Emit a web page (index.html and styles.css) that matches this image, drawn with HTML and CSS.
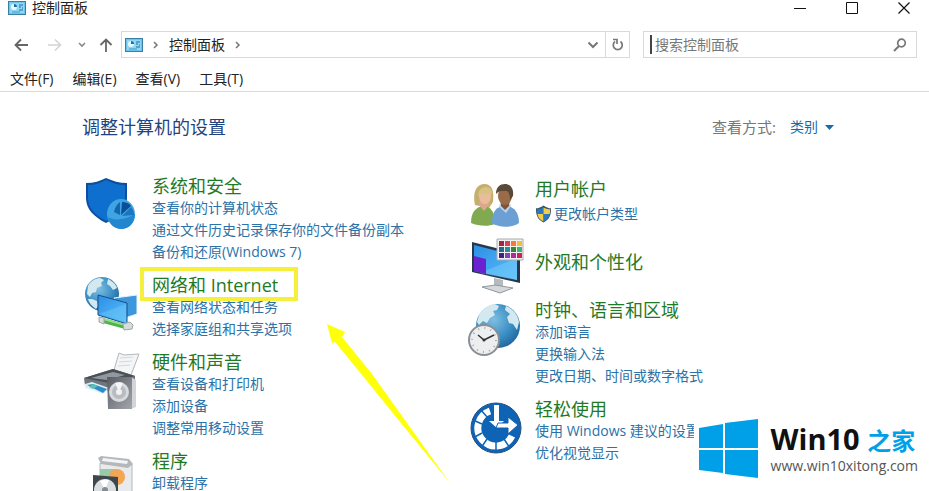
FILE: index.html
```html
<!DOCTYPE html>
<html lang="zh-CN">
<head>
  <meta charset="UTF-8">
  <title>控制面板</title>
  <meta name="viewport" content="width=device-width, initial-scale=1.0">
  <link rel="stylesheet" href="styles.css">
</head>
<body>

  <svg width="0" height="0" class="defs" aria-hidden="true">
    <defs>
      <linearGradient id="screen" x1="0" y1="0" x2="1" y2="1">
        <stop offset="0" stop-color="#2b8fe6"/>
        <stop offset="1" stop-color="#5cc0fa"/>
      </linearGradient>
      <radialGradient id="ocean" cx="0.4" cy="0.35" r="0.7">
        <stop offset="0" stop-color="#7fbfe2"/>
        <stop offset="0.6" stop-color="#3b8fc4"/>
        <stop offset="1" stop-color="#1f659c"/>
      </radialGradient>
      <linearGradient id="metal" x1="0" y1="0" x2="1" y2="1">
        <stop offset="0" stop-color="#585c62"/>
        <stop offset="1" stop-color="#a3a7ac"/>
      </linearGradient>
      <symbol id="panel" viewBox="0 0 18 14">
        <rect x="0.5" y="0.5" width="17" height="13" fill="#6cc4ea" stroke="#3a7fa5"/>
        <rect x="2" y="2" width="14" height="10" fill="#8fd8f5"/>
        <circle cx="6" cy="6" r="3" fill="#e8f8ff"/>
        <path d="M6 6V3a3 3 0 0 1 3 3z" fill="#1b6c9f"/>
        <path d="M11 4h4M11 6h2M14 7h1M11 9h4" stroke="#1f6f9e"/>
        <path d="M4 11h8" stroke="#3f98c4"/>
      </symbol>
    </defs>
  </svg>

  <div class="window">
    <header class="titlebar">
      <svg class="panel-icon" aria-hidden="true"><use href="#panel"/></svg>
      <span class="titlebar-text">控制面板</span>
      <div class="window-buttons">
        <button aria-label="最小化"><svg width="12" height="12"><path d="M0 6.5h12" stroke="#111"/></svg></button>
        <button aria-label="最大化"><svg width="12" height="12"><path d="M0.5 0.5h11v11h-11z" fill="none" stroke="#111"/></svg></button>
        <button aria-label="关闭"><svg width="12" height="12"><path d="M0.5 0.5l11 11M11.5 0.5l-11 11" stroke="#111" stroke-width="1.2"/></svg></button>
      </div>
    </header>

    <nav class="navbar">
      <div class="nav-buttons">
        <button aria-label="后退"><svg width="14" height="14"><path d="M14 7H1.5M7 1.5L1.5 7 7 12.5" fill="none" stroke="#666" stroke-width="1.8"/></svg></button>
        <button aria-label="前进"><svg width="14" height="14"><path d="M0 7h12.5M7 1.5L12.5 7 7 12.5" fill="none" stroke="#d4d4d4" stroke-width="1.6"/></svg></button>
        <button class="recent" aria-label="最近位置"><svg width="8" height="6"><path d="M1 1l3 3 3-3" fill="none" stroke="#888" stroke-width="1.6"/></svg></button>
        <button aria-label="上移"><svg width="14" height="14"><path d="M7 14V1.5M1.5 7L7 1.5 12.5 7" fill="none" stroke="#666" stroke-width="1.8"/></svg></button>
      </div>

      <div class="address">
        <svg class="panel-icon" aria-hidden="true"><use href="#panel"/></svg>
        <svg class="crumb-arrow" width="6" height="8"><path d="M1 1l3 3-3 3" fill="none" stroke="#777" stroke-width="1.5"/></svg>
        <a href="#" class="crumb">控制面板</a>
        <svg class="crumb-arrow" width="6" height="8"><path d="M1 1l3 3-3 3" fill="none" stroke="#777" stroke-width="1.5"/></svg>
        <button class="history" aria-label="以前的位置"><svg width="12" height="8"><path d="M1.5 1.5L6 6l4.500-4.500" fill="none" stroke="#777" stroke-width="2"/></svg></button>
        <button class="refresh" aria-label="刷新"><svg width="14" height="14"><path d="M9.500 3.500a4.500 4.500 0 1 1-5.500 0M2 1.500h4v4.500" fill="none" stroke="#777" stroke-width="1.7"/></svg></button>
      </div>

      <div class="search">
        <input type="text" placeholder="搜索控制面板" aria-label="搜索控制面板">
        <button aria-label="搜索"><svg width="14" height="14"><circle cx="8.500" cy="5" r="3.800" fill="none" stroke="#777" stroke-width="1.700"/><path d="M6 8L1 13" stroke="#777" stroke-width="2"/></svg></button>
      </div>
    </nav>

    <div class="menubar">
      <button>文件(F)</button>
      <button>编辑(E)</button>
      <button>查看(V)</button>
      <button>工具(T)</button>
    </div>

    <main>
      <div class="heading">
        <h1>调整计算机的设置</h1>
        <div class="view-by">
          <label for="view">查看方式:</label>
          <select id="view"><option>类别</option></select>
          <svg width="9" height="5" aria-hidden="true"><path d="M0 0h9L4.500 5z" fill="#1a6ba5"/></svg>
        </div>
      </div>

      <div class="categories">
        <div class="column">
          <section class="category">
            <svg class="icon" viewBox="0 0 54 45" aria-hidden="true">
              <path d="M2 6c8 0 14-2 20-5 7 3 13 5 21 5v15c0 12-9 19-21 25C10 40 2 32 2 21z" fill="#0c4f9e"/>
              <path d="M4 8c7 0 13-2 18-5 6 3 12 5 19 5v13c0 11-8 17-19 23C11 38 4 31 4 21z" fill="#0f6fce"/>
              <ellipse cx="37" cy="37" rx="14" ry="15" fill="#3fa5e2"/>
              <path d="M24 40c6 4 18 3 27-3 0 9-6 15-14 15-6 0-12-5-13-12z" fill="#2387cf"/>
              <path d="M37 38l1-13c4 0 7 1 9 4z" fill="#0b4f96"/>
              <path d="M36 38l-6-3c1-5 3-8 6-10z" fill="#1765b0"/>
              <path d="M38 39l9-9c2 2 3 5 3 8z" fill="#1c75bf"/>
            </svg>
            <div class="links">
              <h2><a href="#">系统和安全</a></h2>
              <a href="#">查看你的计算机状态</a>
              <a href="#">通过文件历史记录保存你的文件备份副本</a>
              <a href="#">备份和还原(Windows 7)</a>
            </div>
          </section>

          <section class="category">
            <svg class="icon" viewBox="0 0 54 45" aria-hidden="true">
              <circle cx="18" cy="18" r="17" fill="url(#ocean)"/>
              <path d="M4 10c2-4 7-8 12-8l4 2-3 3 1 3-5 2-1 4-4 1-2 4-3-3zM24 3c4 2 8 5 9 9l-4 2-3-4-3-2zM8 23l5 2 1 5-2 3c-4-3-7-6-8-10z" fill="#d4e9ef"/>
              <path d="M30 22l23-3v19l-12 4z" fill="#3d97dd" stroke="#e8f3fb"/>
              <path d="M14 19l29 8v21l-29-9z" fill="url(#screen)" stroke="#174f86"/>
              <path d="M15 38L42 28v18z" fill="#79cdfb" opacity="0.4"/>
              <path d="M19 42l22 6v5l-22-6z" fill="#4fb54b"/>
              <path d="M19 42l22 6v2l-22-6z" fill="#92df89"/>
              <path d="M15 41l5 1v6l-5-2zM39 48l7-2 3 3-1 4-8 1z" fill="#d9dcdd" stroke="#a1a6a9"/>
            </svg>
            <div class="links">
              <h2 class="marked"><a href="#">网络和 Internet</a></h2>
              <a href="#">查看网络状态和任务</a>
              <a href="#">选择家庭组和共享选项</a>
            </div>
          </section>

          <section class="category">
            <svg class="icon" viewBox="0 0 54 45" aria-hidden="true">
              <path d="M30 17l5-17 5 2 15-1-8 21z" fill="#f4f5f7" stroke="#b3b7bb"/>
              <path d="M36 5l13-1M35 9l13-1M34 13l12-1" stroke="#d5d8db"/>
              <path d="M0 25l29-9 22 7v6L26 38 1 33z" fill="#70767e"/>
              <path d="M0 25l29-9 22 7-26 7z" fill="#4b5057"/>
              <path d="M7 25l22-6 12 3-18 5z" fill="#92989f"/>
              <path d="M1 31l7-2 17 6-5 6L1 35z" fill="#e2edf5"/>
              <path d="M3 32l6-1 14 5-4 4z" fill="#278dcb"/>
              <path d="M9 31l5 2-5 3-4-2z" fill="#5cc3a6"/>
              <path d="M47 24l5 3v27l-5 2z" fill="#d2d4d7"/>
              <path d="M23 24h25v32H24z" fill="url(#metal)"/>
              <circle cx="35" cy="39" r="10" fill="#d7dade"/>
              <circle cx="35" cy="39" r="7" fill="#b8bcc1"/>
              <path d="M35 39l-4-9a10 10 0 0 1 8 0z" fill="#f5f5f6"/>
              <circle cx="35" cy="39" r="3" fill="#f2f2f3"/>
            </svg>
            <div class="links">
              <h2><a href="#">硬件和声音</a></h2>
              <a href="#">查看设备和打印机</a>
              <a href="#">添加设备</a>
              <a href="#">调整常用移动设置</a>
            </div>
          </section>

          <section class="category">
            <svg class="icon" viewBox="0 0 54 45" aria-hidden="true">
              <path d="M16 11l26 3 6-2v43H16z" fill="#e9eaeb" stroke="#b4b7b9"/>
              <path d="M14 6l3-2 28 3 4 5-5 4-27-4z" fill="#b5b8bb"/>
              <path d="M19 6l25 3-1 3-25-3z" fill="#f3f4f5"/>
              <path d="M16 17h16v10H16z" fill="#9ac9a9"/>
              <circle cx="33" cy="25" r="8" fill="#f2a553"/>
              <path d="M9 23l25 2v31H9z" fill="#3f464d"/>
              <circle cx="21" cy="38" r="11" fill="#d9dee2"/>
              <path d="M21 38l-5-9a11 11 0 0 1 9-1z" fill="#fff"/>
              <circle cx="21" cy="38" r="3" fill="#858c92"/>
            </svg>
            <div class="links">
              <h2><a href="#">程序</a></h2>
              <a href="#">卸载程序</a>
            </div>
          </section>
        </div>

        <div class="column column-right">
          <section class="category">
            <svg class="icon" viewBox="0 0 54 45" aria-hidden="true">
              <path d="M5 25c-2-9-1-20 9-21 9 0 10 8 9 18l-4 6z" fill="#c6ae6d"/>
              <path d="M1 43c0-11 5-16 12-17 7 0 12 5 12 18-7 3-17 2-24-1z" fill="#81aa50"/>
              <path d="M9 25l5 6 5-6-1-6h-8z" fill="#dba98a"/>
              <ellipse cx="15" cy="16" rx="6" ry="8" fill="#e9bd9c"/>
              <path d="M8 16c0-6 4-9 8-9s6 3 6 7c-6 0-9-2-14 2z" fill="#d8c280"/>
              <path d="M22 43c0-12 5-17 13-17s14 5 14 17c-7 5-20 5-27 0z" fill="#6c9fd4"/>
              <path d="M29 27l7 6 5-7-2-6h-8z" fill="#b9d3ec"/>
              <path d="M31 21h8v5l-4 4-4-4z" fill="#805536"/>
              <ellipse cx="35" cy="16" rx="7" ry="9" fill="#9a6b48"/>
              <path d="M26 14c0-7 4-10 9-10s9 4 8 12l-3 4c0-5-1-8-3-9-4 0-8-1-11 3z" fill="#5a4838"/>
            </svg>
            <div class="links">
              <h2><a href="#">用户帐户</a></h2>
              <a href="#" class="admin">
                <svg width="17" height="18" viewBox="0 0 18 18" aria-hidden="true">
                  <path d="M1 3c3 0 5-1 8-3 3 2 5 3 8 3 0 8-2 12-8 15C3 15 1 11 1 3z" fill="#35556f"/>
                  <path d="M9 2v7H2.500C2 7 2 6 2 4c3 0 5-1 7-2z" fill="#2b78c2"/>
                  <path d="M9 2c2 1 4 2 7 2 0 2 0 3-.5 5H9z" fill="#f5cc45"/>
                  <path d="M2.500 9H9v8c-4-2-6-5-6.500-8z" fill="#f5cc45"/>
                  <path d="M9 9h6.500c-.5 3-2.500 6-6.500 8z" fill="#2b78c2"/>
                </svg>
                更改帐户类型
              </a>
            </div>
          </section>

          <section class="category category-single">
            <svg class="icon" viewBox="0 0 54 45" aria-hidden="true">
              <path d="M24 40l9 2v9h-9z" fill="#b5babf"/>
              <path d="M12 49l13-2 18 3-13 5z" fill="#d5d8db" stroke="#92989e"/>
              <path d="M2 4l48 12v29L2 34z" fill="#27384c"/>
              <path d="M4 7l43 11v24L4 33z" fill="url(#screen)"/>
              <path d="M10 35L47 20v22z" fill="#75ccfc" opacity="0.5"/>
              <path d="M4 18l12 3v15L4 33z" fill="#6a22d0"/>
              <path d="M27 1h26v21H27z" fill="#f3f0f2" stroke="#aaa"/>
              <path d="M29 3h5v5h-5z" fill="#a52345"/><path d="M35 3h5v5h-5z" fill="#dc4053"/><path d="M41 3h5v5h-5z" fill="#ee7d36"/><path d="M47 3h5v5h-5z" fill="#f4bd32"/>
              <path d="M29 9h5v5h-5z" fill="#236691"/><path d="M35 9h5v5h-5z" fill="#249094"/><path d="M41 9h5v5h-5z" fill="#39852f"/><path d="M47 9h5v5h-5z" fill="#36b579"/>
              <path d="M29 15h5v5h-5z" fill="#402184"/><path d="M35 15h5v5h-5z" fill="#8344bc"/><path d="M41 15h5v5h-5z" fill="#ac2ba2"/><path d="M47 15h5v5h-5z" fill="#cd2457"/>
            </svg>
            <div class="links">
              <h2><a href="#">外观和个性化</a></h2>
            </div>
          </section>

          <section class="category">
            <svg class="icon" viewBox="0 0 54 45" aria-hidden="true">
              <circle cx="28" cy="25" r="22" fill="url(#ocean)"/>
              <path d="M9 14C12 8 18 4 24 3l5 2-2 4-4 1 2 4-5 3-3 5-4-2-4 4-2-3zM36 5c7 3 12 9 13 16l-2 8-4-6-4-1-2-6 3-3-5-4z" fill="#d4e9ef"/>
              <circle cx="14" cy="39" r="15" fill="#eceef0" stroke="#8a8f94" stroke-width="2"/>
              <circle cx="14" cy="39" r="12" fill="none" stroke="#a4a9ae" stroke-width="2" stroke-dasharray="1 5.283"/>
              <path d="M8 34l6 5 10-5" fill="none" stroke="#333" stroke-width="1.500"/>
              <circle cx="14" cy="39" r="1.500" fill="#333"/>
            </svg>
            <div class="links">
              <h2><a href="#">时钟、语言和区域</a></h2>
              <a href="#">添加语言</a>
              <a href="#">更换输入法</a>
              <a href="#">更改日期、时间或数字格式</a>
            </div>
          </section>

          <section class="category">
            <svg class="icon" viewBox="0 0 54 45" aria-hidden="true">
              <circle cx="26" cy="28" r="25" fill="#0f63b5" stroke="#264f7c"/>
              <path d="M20 11A18 18 0 1 0 42 36" fill="none" stroke="#fff" stroke-width="7"/>
              <path d="M18 18L10 9M12 24l-9-4M12 33l-9 5M17 39l-6 9M26 42v9M34 39l6 9" stroke="#0f63b5" stroke-width="1.500"/>
              <path d="M24 5h5v16h5l-7 7-8-7h5z" fill="#fff"/>
              <path d="M28 23h10v-6l10 8-10 9v-6H26z" fill="#fff" stroke="#0f63b5"/>
            </svg>
            <div class="links">
              <h2><a href="#">轻松使用</a></h2>
              <a href="#">使用 Windows 建议的设置</a>
              <a href="#">优化视觉显示</a>
            </div>
          </section>
        </div>
      </div>
    </main>

    <svg class="pointer" viewBox="0 0 124 160" aria-hidden="true">
      <path d="M1 1l18 8-3 5 30 37 30 42 48 67-54-66-34-42L9 19l-3 1z" fill="#ffff0a"/>
    </svg>

    <aside class="watermark">
      <svg width="60" height="60" viewBox="0 0 60 60" aria-hidden="true">
        <path d="M0 9l24-4v24H0zM26 4l33-4v29H26zM0 31h24v23L0 51zM26 31h33v28l-33-4z" fill="#00a0e9"/>
      </svg>
      <div>
        <div class="brand">Win10 <span>之家</span></div>
        <div class="site">www.win10xitong.com</div>
      </div>
    </aside>
  </div>

</body>
</html>
```

FILE: styles.css
```css
* {
  box-sizing: border-box;
}

body {
  margin: 0;
  font-family: "Open Sans", "Noto Sans CJK SC", sans-serif;
  font-size: 14px;
  line-height: 22px;
  color: #222;
  background-color: white;
}

button, input, select {
  font: inherit;
  color: inherit;
  background: none;
  border: none;
  padding: 0;
  margin: 0;
}

button {
  display: flex;
  align-items: center;
  justify-content: center;
}

a {
  text-decoration: none;
}

h1, h2 {
  margin: 0;
  font-size: 18px;
  font-weight: normal;
}

.defs {
  position: absolute;
}

.window {
  position: relative;
  height: 100vh;
  overflow: hidden;
}

.panel-icon {
  width: 18px;
  height: 14px;
  flex: none;
}

/* title bar */
.titlebar {
  display: flex;
  align-items: center;
  height: 16px;
  line-height: 16px;
  padding: 0 19px 0 8px;
}

.titlebar-text {
  margin-left: 6px;
}

.window-buttons {
  display: flex;
  gap: 40px;
  margin-left: auto;
}

/* navigation */
.navbar {
  display: flex;
  align-items: center;
  padding: 15px 12px 0 14px;
}

.nav-buttons {
  display: flex;
  gap: 20px;
  width: 107px;
}

.nav-buttons .recent {
  margin: 0 -7px 0 -4px;
}

.address {
  display: flex;
  align-items: center;
  flex: 504;
  height: 27px;
  padding-left: 3px;
  border: 1px solid #d9d9d9;
}

.crumb-arrow {
  margin: 0 10px;
}

.crumb {
  color: #222;
}

.history {
  margin-left: auto;
  width: 24px;
}

.refresh {
  width: 24px;
  height: 25px;
  border-left: 1px solid #d9d9d9;
}

.search {
  display: flex;
  align-items: center;
  flex: 257;
  height: 27px;
  margin-left: 13px;
  padding: 0 9px 0 6px;
  border: 1px solid #d9d9d9;
}

.search input {
  flex: 1;
  min-width: 0;
  height: 19px;
  padding-left: 3px;
  border-left: 2px solid #444;
  outline: none;
}

.search input::placeholder {
  color: #777;
  opacity: 1;
}

/* menu */
.menubar {
  display: flex;
  gap: 19px;
  padding: 10px 10px 1px;
  border-bottom: 1px solid #d9d9d9;
}

/* content */
.heading {
  display: flex;
  align-items: center;
  justify-content: space-between;
  padding: 24px 95px 0 82px;
}

.heading h1 {
  color: #1f4380;
}

.view-by {
  display: flex;
  align-items: center;
  color: #777;
}

.view-by label {
  font-size: 15px;
}

.view-by select {
  appearance: none;
  margin: 0 7px 0 14px;
  color: #1a6ba5;
}

.categories {
  display: grid;
  grid-template-columns: 1fr 1fr;
  padding: 37px 73px 0 84px;
}

.column {
  display: flex;
  flex-direction: column;
  gap: 11px;
}

.column-right {
  padding-top: 3px;
}

.category {
  display: flex;
}

.icon {
  width: 54px;
  height: 45px;
  margin: 2px 14px 0 0;
  flex: none;
  overflow: visible;
}

.column-right .icon {
  margin-right: 11px;
}

.links {
  display: flex;
  flex-direction: column;
  align-items: flex-start;
}

.links a {
  color: #2a72a8;
  white-space: nowrap;
}

.links h2 a {
  color: #1f7a26;
}

.links .admin {
  display: flex;
  align-items: center;
  gap: 2px;
  margin-top: 3px;
}

.category-single {
  min-height: 52px;
}

.category-single .links {
  justify-content: center;
}

.marked {
  position: relative;
}

.marked::after {
  content: "";
  position: absolute;
  inset: -7px -20px -5px -12px;
  border: 4px solid #f6ef3c;
  pointer-events: none;
}

.pointer {
  position: absolute;
  left: 326px;
  top: 323px;
  width: 124px;
  height: 160px;
  pointer-events: none;
}

.watermark {
  position: absolute;
  right: 0;
  bottom: 0;
  display: flex;
  align-items: center;
  gap: 12px;
  padding: 8px 11px 12px 5px;
  background-color: white;
}

.brand {
  font-size: 29px;
  font-weight: bold;
  line-height: 32px;
  color: #111;
  white-space: nowrap;
}

.brand span {
  font-size: 24px;
  color: #00a0e9;
}

.site {
  font-size: 14px;
  line-height: 18px;
  color: #555;
}
```
